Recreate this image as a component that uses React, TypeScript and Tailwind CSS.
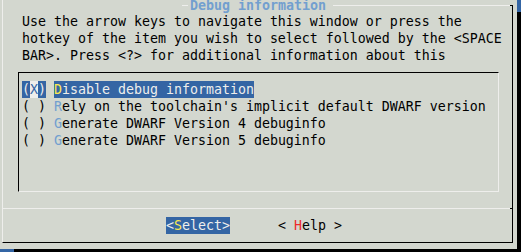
const mono = "font-['DejaVu_Sans_Mono',monospace] text-[13.29px] leading-[17px] whitespace-pre";

const items = [
  { key: "R", rest: "ely on the toolchain's implicit default DWARF version" },
  { key: "G", rest: "enerate DWARF Version 4 debuginfo" },
  { key: "G", rest: "enerate DWARF Version 5 debuginfo" },
];

export default function App() {
  return (
    <div className={`w-[521px] h-[252px] bg-[#3465a4] overflow-hidden flex flex-col ${mono} text-black`}>
      <div className="flex">
        {/* dialog */}
        <div className="w-[517px] h-[249px] bg-[#d3d7cf]">
          <div className="ml-[2px] w-px h-[5px] bg-[#eeeeec]" />
          <div className="ml-[2px] w-[511px] h-[238px] flex flex-col border-l border-r border-b border-l-[#eeeeec] border-r-black border-b-black">
            {/* title on the top border */}
            <div className="flex items-center h-px">
              <div className="w-[179px] shrink-0" />
              <div className="w-[6px] h-px bg-[#eeeeec] shrink-0" />
              <div className="ml-[2px] w-[136px] shrink-0 font-bold text-[#729fcf]">Debug information</div>
              <div className="ml-[7px] w-[177px] h-px bg-[#eeeeec] shrink-0" />
              <div className="w-[2px] h-px bg-black shrink-0" />
            </div>

            <div className="mt-[7px] pl-[19px]">
              <div>Use the arrow keys to navigate this window or press the</div>
              <div>hotkey of the item you wish to select followed by the &lt;SPACE</div>
              <div>BAR&gt;. Press &lt;?&gt; for additional information about this</div>
            </div>

            {/* list box */}
            <div className="mt-[8px] ml-[15px] w-[481px] h-[120px] pt-[8px] pl-[3px] border border-t-black border-l-black border-r-[#eeeeec] border-b-[#eeeeec]">
              <div className="flex">
                <span className="bg-[#3465a4] text-[#eeeeec]">(</span>
                <span className="bg-[#eeeeec] text-[#3465a4]">X</span>
                <span className="bg-[#3465a4] text-[#eeeeec]">)</span>
                <span> </span>
                <span className="bg-[#3465a4] text-[#eeeeec]">
                  <span className="text-[#fce94f]">D</span>isable debug information
                </span>
              </div>
              {items.map((it, i) => (
                <div key={i}>
                  ( ) <span className="text-[#729fcf]">{it.key}</span>
                  {it.rest}
                </div>
              ))}
            </div>

            {/* separator */}
            <div className="mt-[16px] flex h-px">
              <div className="w-[507px] bg-[#eeeeec]" />
              <div className="w-[2px] bg-black" />
            </div>

            {/* buttons */}
            <div className="mt-[8px] flex pl-[163px]">
              <span className="bg-[#3465a4] text-[#eeeeec]">
                &lt;<span className="text-[#fce94f]">S</span>elect&gt;
              </span>
              <span className="ml-[48px]">
                &lt; <span className="text-[#ef2929]">H</span>elp &gt;
              </span>
            </div>
          </div>
        </div>
        {/* right shadow */}
        <div className="mt-[12px] w-[4px] bg-black" />
      </div>
      {/* bottom shadow */}
      <div className="ml-[14px] flex-1 bg-black" />
    </div>
  );
}
